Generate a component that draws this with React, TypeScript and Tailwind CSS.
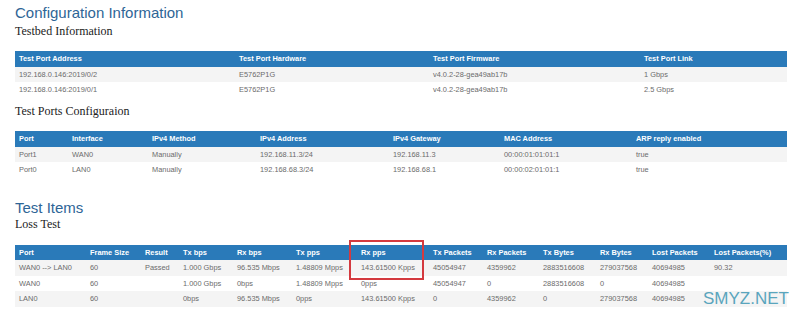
import React from 'react';

type Table = { cols: string[]; head: string[]; rows: string[][] };

const testbed: Table = {
  cols: ['w-[220px]', 'w-[194px]', 'w-[211px]', 'w-[147px]'],
  head: ['Test Port Address', 'Test Port Hardware', 'Test Port Firmware', 'Test Port Link'],
  rows: [
    ['192.168.0.146:2019/0/2', 'E5762P1G', 'v4.0.2-28-gea49ab17b', '1 Gbps'],
    ['192.168.0.146:2019/0/1', 'E5762P1G', 'v4.0.2-28-gea49ab17b', '2.5 Gbps'],
  ],
};

const ports: Table = {
  cols: ['w-[53px]', 'w-[80px]', 'w-[108px]', 'w-[133px]', 'w-[111px]', 'w-[132px]', 'w-[155px]'],
  head: ['Port', 'Interface', 'IPv4 Method', 'IPv4 Address', 'IPv4 Gateway', 'MAC Address', 'ARP reply enabled'],
  rows: [
    ['Port1', 'WAN0', 'Manually', '192.168.11.3/24', '192.168.11.3', '00:00:01:01:01:1', 'true'],
    ['Port0', 'LAN0', 'Manually', '192.168.68.3/24', '192.168.68.1', '00:00:02:01:01:1', 'true'],
  ],
};

const loss: Table = {
  cols: ['w-[71px]', 'w-[55px]', 'w-[38px]', 'w-[54px]', 'w-[59px]', 'w-[65px]', 'w-[72px]', 'w-[54px]', 'w-[56px]', 'w-[57px]', 'w-[52px]', 'w-[62px]', 'w-[77px]'],
  head: ['Port', 'Frame Size', 'Result', 'Tx bps', 'Rx bps', 'Tx pps', 'Rx pps', 'Tx Packets', 'Rx Packets', 'Tx Bytes', 'Rx Bytes', 'Lost Packets', 'Lost Packets(%)'],
  rows: [
    ['WAN0 --> LAN0', '60', 'Passed', '1.000 Gbps', '96.535 Mbps', '1.48809 Mpps', '143.61500 Kpps', '45054947', '4359962', '2883516608', '279037568', '40694985', '90.32'],
    ['WAN0', '60', '', '1.000 Gbps', '0bps', '1.48809 Mpps', '0pps', '45054947', '0', '2883516608', '0', '40694985', ''],
    ['LAN0', '60', '', '0bps', '96.535 Mbps', '0pps', '143.61500 Kpps', '0', '4359962', '0', '279037568', '40694985', ''],
  ],
};

function DataTable({ t }: { t: Table }) {
  return (
    <table className="w-full table-fixed border-collapse text-[7.4px]">
      <colgroup>
        {t.cols.map((c, i) => <col key={i} className={c} />)}
      </colgroup>
      <thead>
        <tr className="h-[15.5px] bg-[#2a7ab9] text-white">
          {t.head.map(h => <th key={h} className="px-[4px] py-0 text-left font-bold whitespace-nowrap">{h}</th>)}
        </tr>
      </thead>
      <tbody>
        {t.rows.map((r, i) => (
          <tr key={i} className={i % 2 === 0 ? 'h-[15.5px] bg-[#f4f4f4]' : 'h-[15.5px] bg-white'}>
            {r.map((c, j) => <td key={j} className="px-[4px] py-0 text-[#6b6b6b] whitespace-nowrap">{c}</td>)}
          </tr>
        ))}
      </tbody>
    </table>
  );
}

const h1 = "text-[15px] leading-[18px] text-[#2e6596]";
const h2 = "font-['Liberation_Serif','Times_New_Roman',serif] text-[12px] leading-[14px] text-[#222]";

export default function App() {
  return (
    <div className="w-[800px] h-[319px] overflow-hidden bg-white pl-[15px] pr-[13px] pt-[4px] font-['Liberation_Sans',Arial,sans-serif]">
      <h1 className={h1}>Configuration Information</h1>
      <h2 className={`${h2} mt-[1.5px]`}>Testbed Information</h2>
      <div className="mt-[13.5px]">
        <DataTable t={testbed} />
      </div>

      <h2 className={`${h2} mt-[6.5px]`}>Test Ports Configuraion</h2>
      <div className="mt-[13px]">
        <DataTable t={ports} />
      </div>

      <h1 className={`${h1} mt-[21px]`}>Test Items</h1>
      <h2 className={h2}>Loss Test</h2>
      <div className="relative mt-[14px]">
        <DataTable t={loss} />
        <div className="absolute left-[334px] top-[-5px] w-[75px] h-[40px] border-2 border-[#d43a3f]" />
        <div className="absolute left-[688px] top-[44px] text-[17px] leading-[20px] text-[#5aa5bd]">SMYZ.NET</div>
      </div>
    </div>
  );
}
